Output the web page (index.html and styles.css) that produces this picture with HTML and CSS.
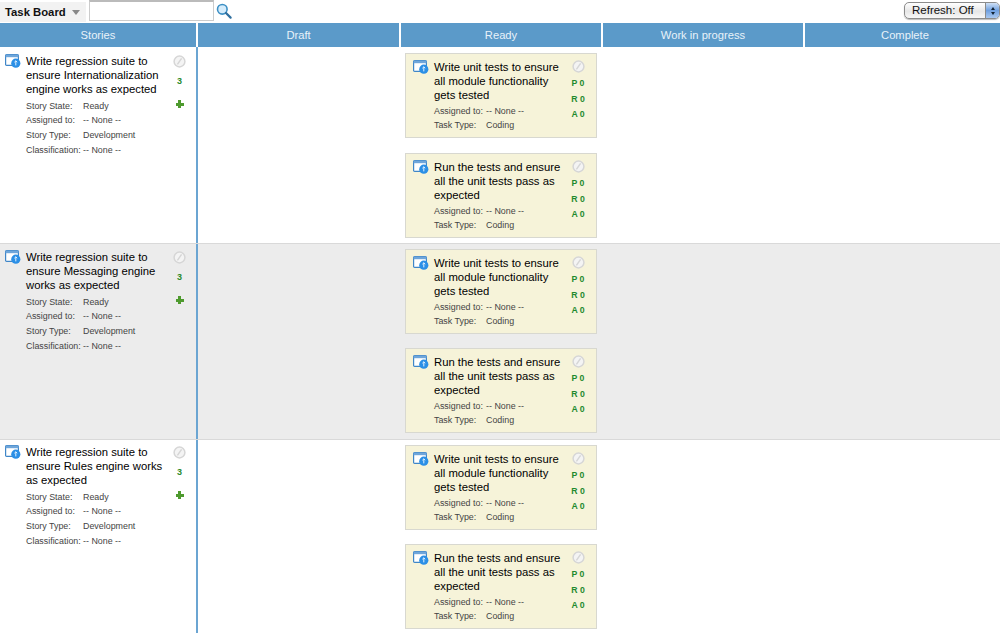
FILE: index.html
```html
<!DOCTYPE html>
<html lang="en">
<head>
<meta charset="utf-8">
<title>Task Board</title>
<link rel="stylesheet" href="styles.css">
</head>
<body>
<svg class="defs" width="0" height="0" aria-hidden="true">
  <symbol id="item" viewBox="0 0 16 14">
    <rect x="0.6" y="0.6" width="12.8" height="10.8" rx="1" fill="#fff" stroke="#3f86c8" stroke-width="1.2"/>
    <rect x="0.6" y="0.6" width="12.8" height="2.6" fill="#6fa6da"/>
    <circle cx="10.8" cy="9.2" r="4.6" fill="#2b8fe6"/>
    <path d="M10.8 6.8v4.6M9.4 8.2l1.4-1.4 1.4 1.4" fill="none" stroke="#dff0ff" stroke-width="1"/>
  </symbol>
  <symbol id="block" viewBox="0 0 13 13">
    <circle cx="6.5" cy="6.5" r="5.4" fill="#f4f4f4" stroke="#d6d6d6" stroke-width="1.5"/>
    <path d="M4.4 9.4 8.6 3.4" stroke="#d6d6d6" stroke-width="1.5"/>
  </symbol>
</svg>

<header class="toolbar">
  <div class="board-menu"><span class="board-title">Task Board</span><span class="caret"></span></div>
  <input class="search" type="text" aria-label="Search">
  <svg class="search-icon" width="16" height="16" viewBox="0 0 16 16">
    <circle cx="6.3" cy="6.3" r="4.8" fill="#d5ecfb" stroke="#3c8fc4" stroke-width="1.6"/>
    <path d="M10 10l4.6 4.6" stroke="#2f6f9f" stroke-width="2.2" stroke-linecap="round"/>
  </svg>
  <div class="refresh"><span class="refresh-label">Refresh: Off</span><span class="refresh-arrows"><i class="up"></i><i class="down"></i></span></div>
</header>

<div class="columns">
  <div class="col-head stories-head">Stories</div>
  <div class="col-head">Draft</div>
  <div class="col-head">Ready</div>
  <div class="col-head">Work in progress</div>
  <div class="col-head">Complete</div>
</div>

<section class="row row-one">
  <div class="story">
    <svg class="item-icon"><use href="#item"/></svg>
    <div class="story-body">
      <div class="title">Write regression suite to ensure Internationalization engine works as expected</div>
      <dl class="meta">
        <dt>Story State:</dt><dd>Ready</dd>
        <dt>Assigned to:</dt><dd>-- None --</dd>
        <dt>Story Type:</dt><dd>Development</dd>
        <dt>Classification:</dt><dd>-- None --</dd>
      </dl>
    </div>
    <div class="story-side">
      <svg class="block"><use href="#block"/></svg>
      <span class="count">3</span>
      <span class="plus"></span>
    </div>
  </div>
  <div class="cell"></div>
  <div class="cell ready">
    <article class="card">
      <svg class="item-icon"><use href="#item"/></svg>
      <div class="card-body">
        <div class="title">Write unit tests to ensure all module functionality gets tested</div>
        <dl class="meta task"><dt>Assigned to:</dt><dd>-- None --</dd><dt>Task Type:</dt><dd>Coding</dd></dl>
      </div>
      <div class="card-side"><svg class="block"><use href="#block"/></svg><b>P 0</b><b>R 0</b><b>A 0</b></div>
    </article>
    <article class="card">
      <svg class="item-icon"><use href="#item"/></svg>
      <div class="card-body">
        <div class="title">Run the tests and ensure all the unit tests pass as expected</div>
        <dl class="meta task"><dt>Assigned to:</dt><dd>-- None --</dd><dt>Task Type:</dt><dd>Coding</dd></dl>
      </div>
      <div class="card-side"><svg class="block"><use href="#block"/></svg><b>P 0</b><b>R 0</b><b>A 0</b></div>
    </article>
  </div>
  <div class="cell"></div>
  <div class="cell"></div>
</section>

<section class="row row-two shaded">
  <div class="story">
    <svg class="item-icon"><use href="#item"/></svg>
    <div class="story-body">
      <div class="title">Write regression suite to ensure Messaging engine works as expected</div>
      <dl class="meta">
        <dt>Story State:</dt><dd>Ready</dd>
        <dt>Assigned to:</dt><dd>-- None --</dd>
        <dt>Story Type:</dt><dd>Development</dd>
        <dt>Classification:</dt><dd>-- None --</dd>
      </dl>
    </div>
    <div class="story-side">
      <svg class="block"><use href="#block"/></svg>
      <span class="count">3</span>
      <span class="plus"></span>
    </div>
  </div>
  <div class="cell"></div>
  <div class="cell ready">
    <article class="card">
      <svg class="item-icon"><use href="#item"/></svg>
      <div class="card-body">
        <div class="title">Write unit tests to ensure all module functionality gets tested</div>
        <dl class="meta task"><dt>Assigned to:</dt><dd>-- None --</dd><dt>Task Type:</dt><dd>Coding</dd></dl>
      </div>
      <div class="card-side"><svg class="block"><use href="#block"/></svg><b>P 0</b><b>R 0</b><b>A 0</b></div>
    </article>
    <article class="card">
      <svg class="item-icon"><use href="#item"/></svg>
      <div class="card-body">
        <div class="title">Run the tests and ensure all the unit tests pass as expected</div>
        <dl class="meta task"><dt>Assigned to:</dt><dd>-- None --</dd><dt>Task Type:</dt><dd>Coding</dd></dl>
      </div>
      <div class="card-side"><svg class="block"><use href="#block"/></svg><b>P 0</b><b>R 0</b><b>A 0</b></div>
    </article>
  </div>
  <div class="cell"></div>
  <div class="cell"></div>
</section>

<section class="row row-three">
  <div class="story">
    <svg class="item-icon"><use href="#item"/></svg>
    <div class="story-body">
      <div class="title">Write regression suite to ensure Rules engine works as expected</div>
      <dl class="meta">
        <dt>Story State:</dt><dd>Ready</dd>
        <dt>Assigned to:</dt><dd>-- None --</dd>
        <dt>Story Type:</dt><dd>Development</dd>
        <dt>Classification:</dt><dd>-- None --</dd>
      </dl>
    </div>
    <div class="story-side">
      <svg class="block"><use href="#block"/></svg>
      <span class="count">3</span>
      <span class="plus"></span>
    </div>
  </div>
  <div class="cell"></div>
  <div class="cell ready">
    <article class="card">
      <svg class="item-icon"><use href="#item"/></svg>
      <div class="card-body">
        <div class="title">Write unit tests to ensure all module functionality gets tested</div>
        <dl class="meta task"><dt>Assigned to:</dt><dd>-- None --</dd><dt>Task Type:</dt><dd>Coding</dd></dl>
      </div>
      <div class="card-side"><svg class="block"><use href="#block"/></svg><b>P 0</b><b>R 0</b><b>A 0</b></div>
    </article>
    <article class="card">
      <svg class="item-icon"><use href="#item"/></svg>
      <div class="card-body">
        <div class="title">Run the tests and ensure all the unit tests pass as expected</div>
        <dl class="meta task"><dt>Assigned to:</dt><dd>-- None --</dd><dt>Task Type:</dt><dd>Coding</dd></dl>
      </div>
      <div class="card-side"><svg class="block"><use href="#block"/></svg><b>P 0</b><b>R 0</b><b>A 0</b></div>
    </article>
  </div>
  <div class="cell"></div>
  <div class="cell"></div>
</section>
</body>
</html>
```
FILE: styles.css
```css
* { box-sizing: border-box; }
html, body { margin: 0; height: 633px; overflow: hidden; background: #fff; }
body { font-family: "Liberation Sans", Arial, sans-serif; color: #000; }
.defs { position: absolute; }

.toolbar { display: flex; align-items: flex-start; height: 23px; }
.board-menu { display: flex; align-items: center; width: 86px; height: 20px; margin-top: 2px; padding-left: 5px; background: #f2f2f2; }
.board-title { font-size: 11.3px; font-weight: bold; color: #111; }
.caret { margin-left: 6px; margin-top: 1px; border-left: 4px solid transparent; border-right: 4px solid transparent; border-top: 5px solid #888; }
.search { width: 125px; height: 21px; margin: 0 0 0 3px; padding: 0; background: #fff; border: 1px solid #ccc; border-top: 2px solid #bbb; border-radius: 0; }
.search-icon { margin: 3px 0 0 2px; }
.refresh { display: flex; width: 96px; height: 17px; margin: 2px 0 0 auto; border: 1px solid #8b8b8b; border-radius: 5px; overflow: hidden; background: linear-gradient(#fff, #e6e6e6 55%, #f7f7f7); box-shadow: 0 1px 1px #bbb; }
.refresh-label { flex: 1; font-size: 11.5px; line-height: 15px; padding-left: 7px; color: #111; }
.refresh-arrows { display: flex; flex-direction: column; align-items: center; justify-content: center; gap: 2px; width: 14px; background: linear-gradient(#cfe0f5, #6fa0e0 50%, #a9c8f0); border-left: 1px solid #8b8b8b; }
.refresh-arrows i { display: block; border-left: 2px solid transparent; border-right: 2px solid transparent; }
.refresh-arrows .up { border-bottom: 3px solid #123; }
.refresh-arrows .down { border-top: 3px solid #123; }

.columns, .row { display: grid; grid-template-columns: 198px 203px 202px 202px 195px; }
.columns { height: 24px; background: #fff; }
.col-head { margin-right: 2px; background: #5b9ac9; color: #e8f2f9; font-size: 11.2px; line-height: 24px; text-align: center; }
.col-head:last-child { margin-right: 0; padding-left: 5px; }

.row { border-bottom: 1px solid #d9d9d9; }
.row-one { height: 197px; }
.row-two { height: 196px; }
.row-three { height: 194px; border-bottom: 0; }
.shaded { background: #ececec; }

.story { display: flex; padding: 7px 0 0 5px; border-right: 2px solid #6ba5d2; }
.row-two .story { padding-top: 6px; }
.row-three .story { padding-top: 5px; }
.item-icon { flex: none; width: 16px; height: 14px; }
.story-body { flex: none; width: 143px; margin-left: 5px; }
.story-side { display: flex; flex-direction: column; align-items: center; width: 21px; padding-top: 1px; }
.title { font-size: 11.3px; line-height: 14.2px; color: #000; }
.meta { display: grid; margin: 2px 0 0; font-size: 8.9px; line-height: 14.8px; color: #444; grid-template-columns: 57px 1fr; }
.meta dt, .meta dd { margin: 0; }
.block { width: 13px; height: 13px; }
.count { margin-top: 8px; font-size: 9px; font-weight: bold; line-height: 10px; color: #2a8a2a; }
.plus { width: 8px; height: 8px; margin-top: 14px; background: linear-gradient(#4e9a2e, #4e9a2e) center / 8px 3px no-repeat, linear-gradient(#4e9a2e, #4e9a2e) center / 3px 8px no-repeat; }

.cell { min-width: 0; }
.ready { display: flex; flex-direction: column; gap: 15px; padding: 6px 0 0 4px; }
.row-two .ready { padding-top: 5px; gap: 14px; }
.row-three .ready { padding-top: 5px; gap: 14px; }
.card { display: flex; width: 192px; height: 85px; padding: 6px 0 0 7px; background: #f6f3d9; border: 1px solid #d8d8d0; }
.card-body { flex: none; width: 131px; margin-left: 5px; }
.card-side { display: flex; flex-direction: column; align-items: center; width: 24px; margin-left: 1px; }
.card-side b { font-size: 8.7px; line-height: 15.5px; color: #1f8a2f; }
.card-side .block + b { margin-top: 3px; }
.meta.task { margin-top: 1px; grid-template-columns: 52px 1fr; }
```
